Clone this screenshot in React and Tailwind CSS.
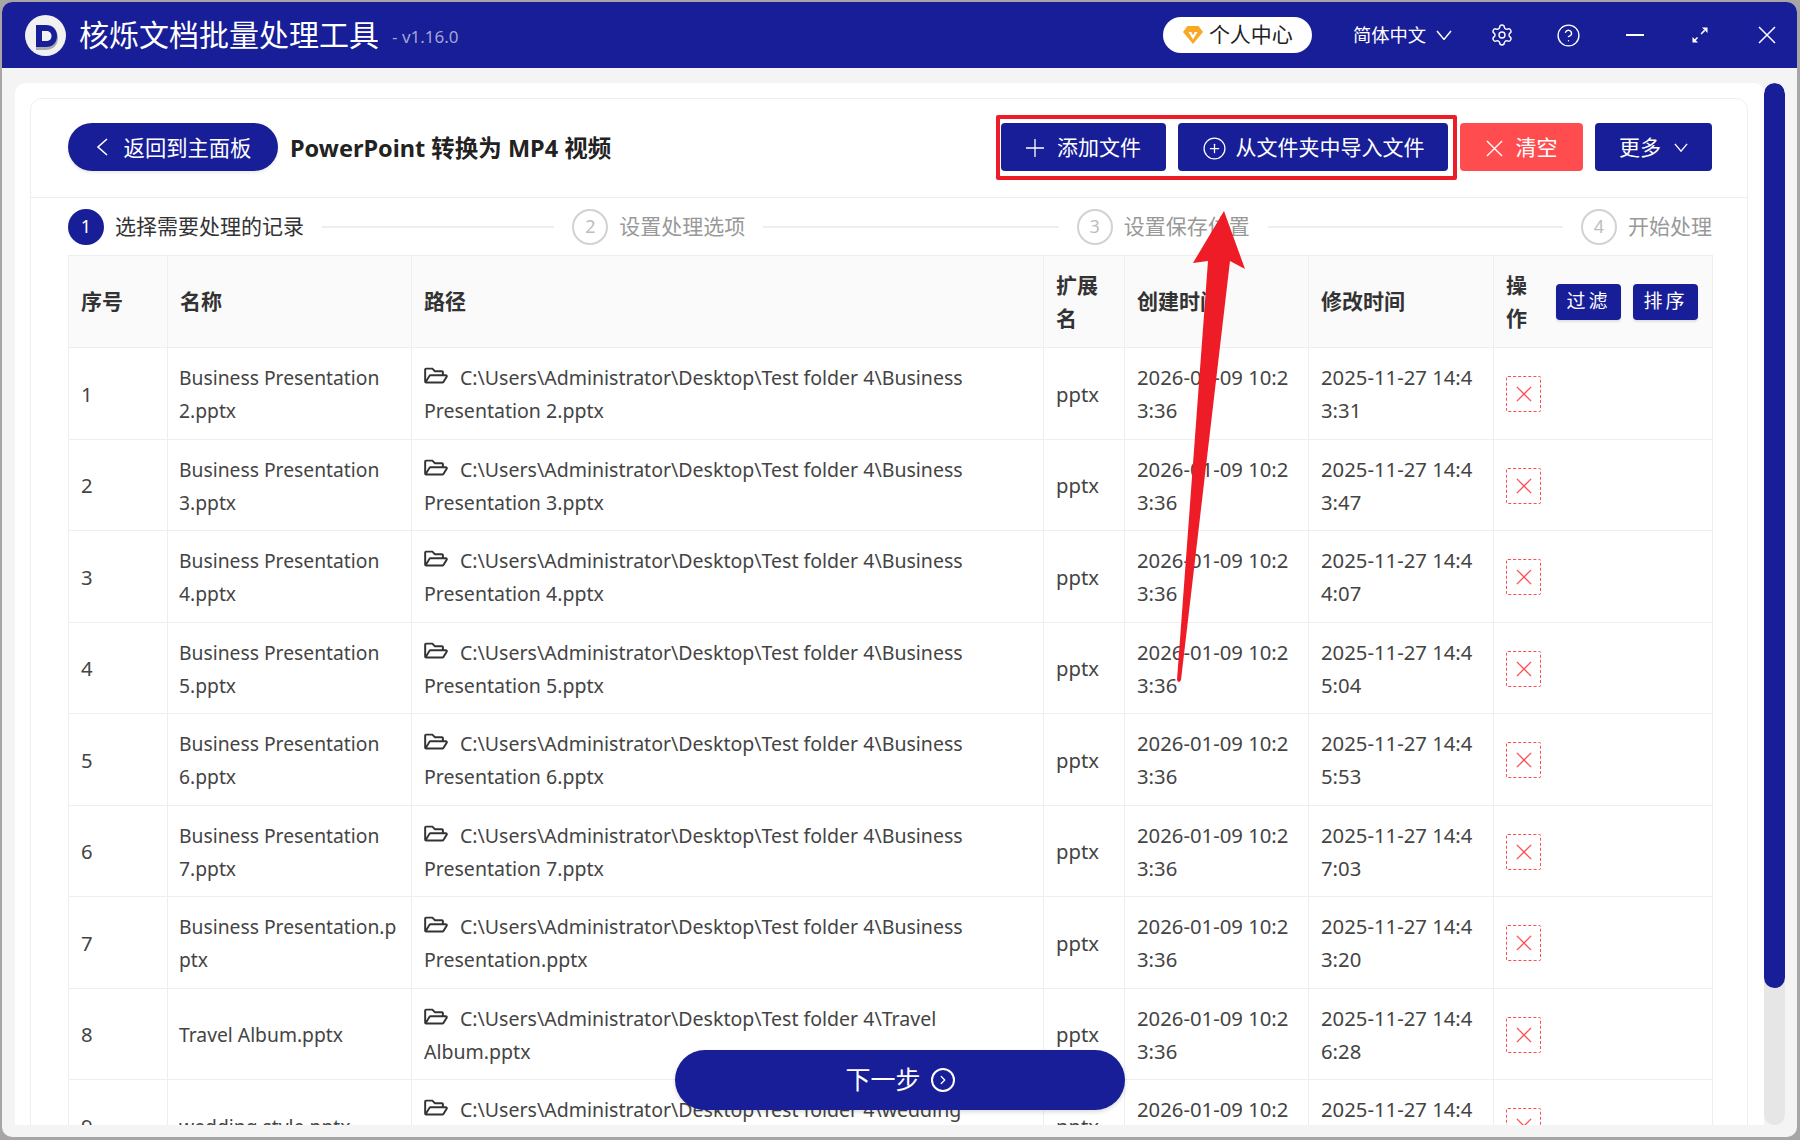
import React from "react";
import { Settings, CircleHelp, CirclePlus, ChevronRight } from "lucide-react";
import { FaRegFolderOpen } from "react-icons/fa";

const rows = [
  ["1", ["Business Presentation", "2.pptx"], ["Business", "Presentation 2.pptx"], "3:31"],
  ["2", ["Business Presentation", "3.pptx"], ["Business", "Presentation 3.pptx"], "3:47"],
  ["3", ["Business Presentation", "4.pptx"], ["Business", "Presentation 4.pptx"], "4:07"],
  ["4", ["Business Presentation", "5.pptx"], ["Business", "Presentation 5.pptx"], "5:04"],
  ["5", ["Business Presentation", "6.pptx"], ["Business", "Presentation 6.pptx"], "5:53"],
  ["6", ["Business Presentation", "7.pptx"], ["Business", "Presentation 7.pptx"], "7:03"],
  ["7", ["Business Presentation.p", "ptx"], ["Business", "Presentation.pptx"], "3:20"],
  ["8", ["Travel Album.pptx"], ["Travel", "Album.pptx"], "6:28"],
  ["9", ["wedding style.pptx"], ["wedding", "style.pptx"], "3:10"],
];

function XIcon({ size = 18, w = 1.4, className = "" }) {
  return (
    <svg width={size} height={size} viewBox="0 0 18 18" fill="none" stroke="currentColor" strokeWidth={w} className={"shrink-0 " + className}>
      <path d="M1 1 17 17M17 1 1 17" />
    </svg>
  );
}

function PlusIcon() {
  return (
    <svg width="18" height="18" viewBox="0 0 18 18" fill="none" stroke="currentColor" strokeWidth="1.3" className="shrink-0">
      <path d="M9 0v18M0 9h18" />
    </svg>
  );
}

function ChevDown({ w = 14, className = "" }) {
  return (
    <svg width={w} height={w * 0.65} viewBox="0 0 16 10.400" fill="none" stroke="currentColor" strokeWidth="1.5" className={"shrink-0 " + className}>
      <path d="M1 1 8 9.400 15 1" />
    </svg>
  );
}

function Step({ n, label, active, last }) {
  return (
    <div className={last ? "flex shrink-0 items-center gap-[11px]" : "flex min-w-0 flex-1 items-center gap-[11px]"}>
      <span
        className={
          active
            ? "flex h-[36px] w-[36px] shrink-0 items-center justify-center rounded-full bg-[#181e97] text-[18px] text-white"
            : "flex h-[36px] w-[36px] shrink-0 items-center justify-center rounded-full border-2 border-[#d2d2d2] text-[18px] text-[#bdbdbd]"
        }
      >
        {n}
      </span>
      <span className={active ? "whitespace-nowrap text-[21px] text-[#333]" : "whitespace-nowrap text-[21px] text-[#999]"}>{label}</span>
      {!last && <div className="ml-[7px] mr-[18px] h-[2px] flex-1 bg-[#eeeeee]" />}
    </div>
  );
}

const th = "border border-[#eeeeee] bg-[#fafafa] px-[12px] text-left align-middle text-[21px] font-bold leading-[33px] text-[#333]";
const td = "border border-[#eeeeee] px-[12px] pt-[2px] align-middle text-[19.550px] leading-[33px] text-[#444] whitespace-nowrap";
const tdName = "border border-[#eeeeee] pl-[11px] pr-[12px] pt-[2px] align-middle text-[19.300px] leading-[33px] text-[#444] whitespace-nowrap";
const tdDate = "border border-[#eeeeee] px-[12px] pt-[2px] align-middle text-[20.300px] leading-[33px] text-[#444] whitespace-nowrap";

export default function App() {
  return (
    <div className="h-[1140px] w-[1800px] overflow-hidden bg-[#a9a5a5] pb-[3px] pl-[2px] pr-[3px] pt-[2px] [font-family:'Noto_Sans','Noto_Sans_CJK_SC',sans-serif]">
      <div className="relative flex h-full flex-col overflow-hidden rounded-[10px] bg-[#f4f4f4]">
        <header className="flex h-[66px] shrink-0 items-center bg-[#181e97] pl-[23px] pr-[21px] text-white">
          <svg width="41" height="41" viewBox="0 0 41 41" className="shrink-0">
            <circle cx="20.5" cy="20.5" r="20.5" fill="#f1f1f1" />
            <path d="M11 12h10c7 0 12 4 12 11s-5 12-12 12H11z" fill="#a9a9b0" />
            <path d="M11 10h10c7 0 11 4.500 11 11s-4 11-11 11H11z" fill="#181e97" />
            <path d="M17 16h4c3.500 0 5.500 2 5.500 5s-2 5-5.500 5h-4z" fill="#f1f1f1" />
          </svg>
          <h1 className="ml-[13px] whitespace-nowrap text-[30px] font-normal leading-none">核烁文档批量处理工具</h1>
          <span className="ml-[13px] mt-[3px] whitespace-nowrap text-[17px] text-[#a3a5d6]">- v1.16.0</span>
          <div className="ml-auto flex h-[36px] w-[149px] items-center rounded-full bg-white pl-[20px] text-[21px] text-[#222]">
            <svg width="20" height="18" viewBox="0 0 20 18" className="shrink-0">
              <path d="M4.500 0h11L20 6 10 18 0 6z" fill="#f9a825" />
              <path d="M5.500 6h3L10 9.500 11.500 6h3L10 13.500z" fill="#fff" />
            </svg>
            <span className="ml-[6px] whitespace-nowrap">个人中心</span>
          </div>
          <span className="ml-[41px] whitespace-nowrap text-[18.300px]">简体中文</span>
          <ChevDown w={16} className="ml-[10px]" />
          <Settings className="ml-[38px] h-[24px] w-[24px] shrink-0" strokeWidth={1.4} />
          <CircleHelp className="ml-[42px] h-[25px] w-[25px] shrink-0" strokeWidth={1.3} />
          <div className="ml-[45px] h-[2px] w-[18px] shrink-0 bg-white" />
          <svg width="18" height="18" viewBox="0 0 18 18" className="ml-[47px] shrink-0" fill="none" stroke="#fff" strokeWidth="1.500">
            <path d="M3 15 15 3" strokeDasharray="5 5" />
            <path d="M11 1.500h5.500V7z" fill="#fff" stroke="none" />
            <path d="M7 16.500H1.500V11z" fill="#fff" stroke="none" />
          </svg>
          <XIcon size={18} w={1.5} className="ml-[49px]" />
        </header>

        <div className="flex min-h-0 flex-1 pb-[12px] pl-[13px] pr-[12px] pt-[15px]">
          <main className="relative min-w-0 flex-1 overflow-hidden rounded-t-[10px] bg-white pl-[15px] pr-[16px] pt-[15px]">
            <div className="h-[1100px] rounded-t-[12px] border border-[#eeeeee] bg-white">
              <div className="flex h-[99px] items-center border-b border-[#eeeeee] pb-[2px] pl-[37px] pr-[35px]">
                <button className="flex h-[48px] w-[210px] items-center justify-center gap-[15px] rounded-full bg-[#181e97] pt-[2px] text-[21.300px] text-white shadow-[0_2px_3px_rgba(0,0,0,0.08)]">
                  <svg width="14" height="18" viewBox="0 0 14 18" fill="none" stroke="currentColor" strokeWidth="1.600" className="mb-[2px] shrink-0">
                    <path d="M12 1 3 9l9 8" />
                  </svg>
                  <span className="whitespace-nowrap">返回到主面板</span>
                </button>
                <h2 className="ml-[12px] mt-[3px] whitespace-nowrap text-[23.500px] font-bold text-[#222]">PowerPoint 转换为 MP4 视频</h2>
                <div className="ml-auto flex gap-[12px]">
                  <button className="flex h-[48px] w-[165px] items-center justify-center gap-[13px] rounded-[4px] bg-[#181e97] pt-[2px] text-[21px] text-white">
                    <PlusIcon />
                    <span className="whitespace-nowrap">添加文件</span>
                  </button>
                  <button className="flex h-[48px] w-[270px] items-center justify-center gap-[9px] rounded-[4px] bg-[#181e97] pt-[2px] text-[21px] text-white">
                    <CirclePlus className="h-[25px] w-[25px] shrink-0" strokeWidth={1.2} />
                    <span className="whitespace-nowrap">从文件夹中导入文件</span>
                  </button>
                  <button className="flex h-[48px] w-[123px] items-center justify-center gap-[13px] rounded-[4px] bg-[#ff4d4f] pt-[2px] text-[21px] text-white">
                    <XIcon size={17} w={1.4} />
                    <span className="whitespace-nowrap">清空</span>
                  </button>
                  <button className="flex h-[48px] w-[117px] items-center justify-center gap-[13px] rounded-[4px] bg-[#181e97] pt-[2px] text-[21px] text-white">
                    <span className="whitespace-nowrap">更多</span>
                    <ChevDown w={14} />
                  </button>
                </div>
              </div>

              <div className="flex h-[57px] items-center pb-[1px] pl-[37px] pr-[35px] pt-[1px]">
                <Step n="1" label="选择需要处理的记录" active />
                <Step n="2" label="设置处理选项" />
                <Step n="3" label="设置保存位置" />
                <Step n="4" label="开始处理" last />
              </div>

              <div className="pl-[37px] pr-[35px]">
                <table className="w-[1644px] table-fixed border-collapse">
                  <colgroup>
                    <col className="w-[99px]" />
                    <col className="w-[244px]" />
                    <col className="w-[632px]" />
                    <col className="w-[81px]" />
                    <col className="w-[184px]" />
                    <col className="w-[185px]" />
                    <col className="w-[219px]" />
                  </colgroup>
                  <thead>
                    <tr className="h-[92px]">
                      <th className={th}>序号</th>
                      <th className={th}>名称</th>
                      <th className={th}>路径</th>
                      <th className={th}>扩展<br />名</th>
                      <th className={th}>创建时间</th>
                      <th className={th}>修改时间</th>
                      <th className={th}>
                        <div className="flex items-center">
                          <span>操<br />作</span>
                          <button className="ml-[29px] h-[36px] w-[65px] rounded-[4px] bg-[#181e97] text-[19px] font-normal tracking-[3px] text-white shadow-[0_2px_2px_rgba(0,0,0,0.1)]">过滤</button>
                          <button className="ml-[12px] h-[36px] w-[65px] rounded-[4px] bg-[#181e97] text-[19px] font-normal tracking-[3px] text-white shadow-[0_2px_2px_rgba(0,0,0,0.1)]">排序</button>
                        </div>
                      </th>
                    </tr>
                  </thead>
                  <tbody>
                    {rows.map((r) => (
                      <tr key={r[0]} className="h-[91.5px]">
                        <td className={tdDate}>{r[0]}</td>
                        <td className={tdName}>
                          {r[1].map((l) => (
                            <div key={l}>{l}</div>
                          ))}
                        </td>
                        <td className={td}>
                          <div className="flex items-center">
                            <FaRegFolderOpen className="mb-[4px] mr-[12px] h-[21px] w-[24px] shrink-0 text-[#333]" />
                            <span>{"C:\\Users\\Administrator\\Desktop\\Test folder 4\\" + r[2][0]}</span>
                          </div>
                          <div>{r[2][1]}</div>
                        </td>
                        <td className={tdDate}>pptx</td>
                        <td className={tdDate}>
                          <div>2026-01-09 10:2</div>
                          <div>3:36</div>
                        </td>
                        <td className={tdDate}>
                          <div>2025-11-27 14:4</div>
                          <div>{r[3]}</div>
                        </td>
                        <td className={td}>
                          <button className="flex h-[36px] w-[35px] items-center justify-center rounded-[2px] border border-dashed border-[#ff4d4f] text-[#ff4d4f]">
                            <XIcon size={16} w={1.5} />
                          </button>
                        </td>
                      </tr>
                    ))}
                  </tbody>
                </table>
              </div>
            </div>

            <button className="absolute bottom-[15px] left-[660px] flex h-[60px] w-[450px] items-center justify-center gap-[10px] rounded-full bg-[#181e97] text-[25px] text-white shadow-[0_2px_4px_rgba(0,0,0,0.15)]">
              <span className="whitespace-nowrap">下一步</span>
              <span className="flex h-[24px] w-[24px] items-center justify-center rounded-full border-2 border-white">
                <ChevronRight className="h-[14px] w-[14px]" strokeWidth={2.2} />
              </span>
            </button>
          </main>
          <div className="relative w-[21px] shrink-0 overflow-hidden rounded-full bg-[#e6e6e6]">
            <div className="h-[905px] rounded-full bg-[#181e97]" />
          </div>
        </div>

        <div className="pointer-events-none absolute left-[993.500px] top-[113px] h-[65px] w-[461px] rounded-[2px] border-4 border-[#ee1c27]" />
        <svg className="pointer-events-none absolute left-0 top-0" width="1795" height="1135" viewBox="0 0 1795 1135">
          <path d="M1222 209 1243 267 1228 259 1179 678Q1177 682 1175 678L1206 259 1191 261z" fill="#ee1c27" />
        </svg>
      </div>
    </div>
  );
}
